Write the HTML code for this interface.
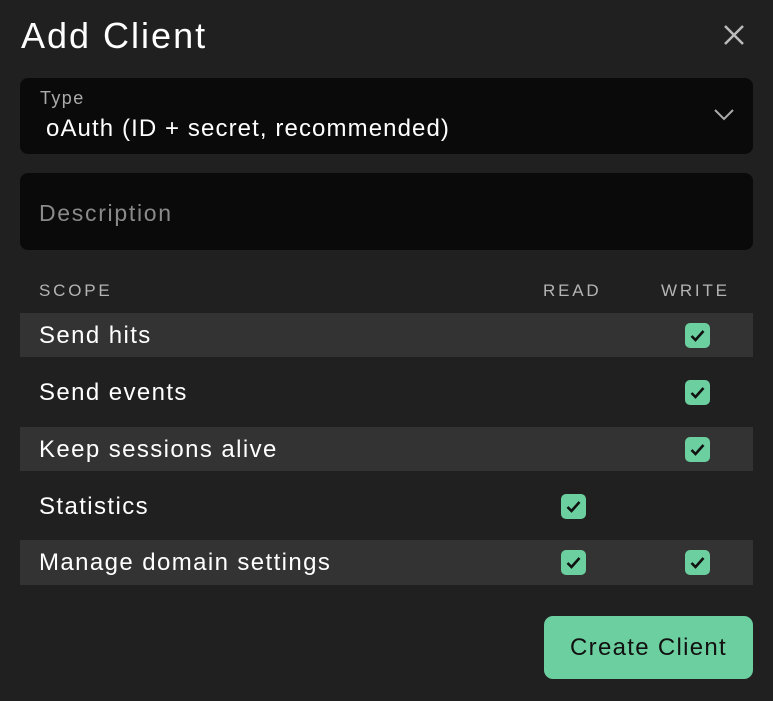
<!DOCTYPE html>
<html><head><style>
body{margin:0;width:773px;height:701px;background:#202020;font-family:"Liberation Sans",sans-serif;color:#fff;position:relative;overflow:hidden}
.a{position:absolute}
.box{position:absolute;left:20px;width:733px;background:#0a0a0a;border-radius:8px}
.row{position:absolute;left:20px;width:733px;height:44px}
.row.s{background:#333}
.row span{position:absolute;left:19px;top:9px;font-size:24px;letter-spacing:1.4px}
.cb{position:absolute;width:25px;height:25px;background:#6ccf9f;border-radius:5px;top:10px}
.cb svg{position:absolute;left:5px;top:6px}
.h{position:absolute;top:281px;font-size:17px;letter-spacing:2.8px;color:#b4b4b4}
</style></head><body>
<div class="a" style="left:21px;top:15px;font-size:36px;letter-spacing:2px">Add Client</div>
<svg class="a" style="left:723px;top:24px" width="22" height="22" viewBox="0 0 22 22"><path d="M2 2L20 20M20 2L2 20" stroke="#bbb" stroke-width="2.5"/></svg>
<div class="box" style="top:78px;height:76px">
<div class="a" style="left:20px;top:10px;font-size:18px;color:#aaa;letter-spacing:1.4px">Type</div>
<div class="a" style="left:26px;top:37px;font-size:24px;letter-spacing:1.1px">oAuth (ID + secret, recommended)</div>
<svg class="a" style="left:694px;top:31px" width="20" height="12" viewBox="0 0 20 12"><path d="M1 1L10 10L19 1" stroke="#aaa" stroke-width="2" fill="none"/></svg>
</div>
<div class="box" style="top:173px;height:77px">
<div class="a" style="left:19px;top:27px;font-size:23px;color:#8a8a8a;letter-spacing:1.7px">Description</div>
</div>
<div class="h" style="left:39px">SCOPE</div>
<div class="h" style="left:543px">READ</div>
<div class="h" style="left:661px">WRITE</div>
<div class="row s" style="top:313px"><span>Send hits</span><div class="cb" style="left:665px"><svg width="15" height="13" viewBox="0 0 15 13"><path d="M1.5 7L5.5 11L13.5 2" stroke="#111" stroke-width="2.6" fill="none"/></svg></div></div>
<div class="row" style="top:370px"><span>Send events</span><div class="cb" style="left:665px"><svg width="15" height="13" viewBox="0 0 15 13"><path d="M1.5 7L5.5 11L13.5 2" stroke="#111" stroke-width="2.6" fill="none"/></svg></div></div>
<div class="row s" style="top:427px"><span>Keep sessions alive</span><div class="cb" style="left:665px"><svg width="15" height="13" viewBox="0 0 15 13"><path d="M1.5 7L5.5 11L13.5 2" stroke="#111" stroke-width="2.6" fill="none"/></svg></div></div>
<div class="row" style="top:484px"><span>Statistics</span><div class="cb" style="left:541px"><svg width="15" height="13" viewBox="0 0 15 13"><path d="M1.5 7L5.5 11L13.5 2" stroke="#111" stroke-width="2.6" fill="none"/></svg></div></div>
<div class="row s" style="top:540px;height:45px"><span>Manage domain settings</span><div class="cb" style="left:541px"><svg width="15" height="13" viewBox="0 0 15 13"><path d="M1.5 7L5.5 11L13.5 2" stroke="#111" stroke-width="2.6" fill="none"/></svg></div><div class="cb" style="left:665px"><svg width="15" height="13" viewBox="0 0 15 13"><path d="M1.5 7L5.5 11L13.5 2" stroke="#111" stroke-width="2.6" fill="none"/></svg></div></div>
<div class="a" style="left:544px;top:616px;width:209px;height:63px;background:#6ccf9f;border-radius:9px;color:#111;font-size:24px;line-height:63px;text-align:center;letter-spacing:1.3px">Create Client</div>
</body></html>
